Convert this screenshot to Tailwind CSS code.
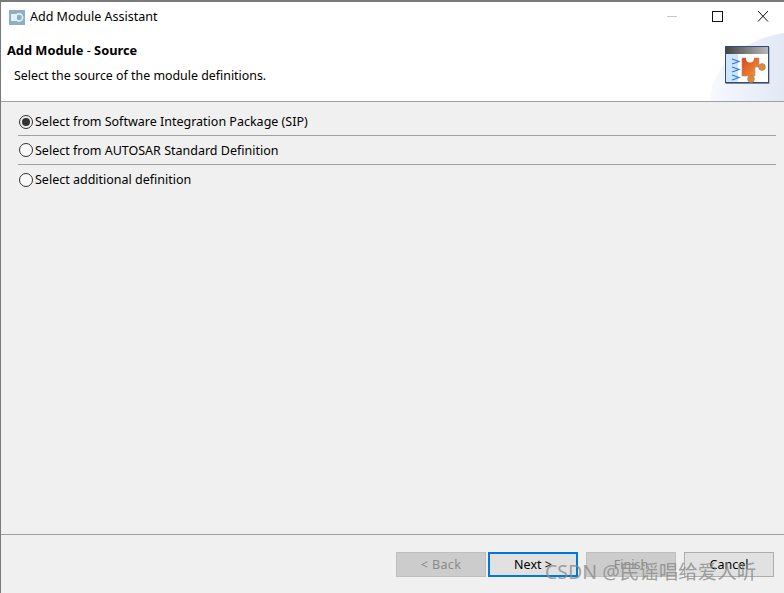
<!doctype html>
<html><head><meta charset="utf-8"><script src="https://cdn.jsdelivr.net/npm/@tailwindcss/browser@4"></script></head>
<body class="m-0">
<div class="relative w-[784px] h-[593px] overflow-hidden bg-[#f0f0f0] flex flex-col border-t-2 border-l border-[#7a7a7a] font-['Noto_Sans',sans-serif] text-[12.5px] text-black">
  <div class="bg-white h-[99px] relative shrink-0 overflow-hidden">
    <div class="absolute left-[709px] top-[30px] w-[90px] h-[70px] rounded-tl-[100%] bg-gradient-to-r from-[#f7f9fd] to-[#dde5f3]"></div>
    <div class="relative flex items-center h-[30px] pl-[8px] pt-[1px]">
      <svg width="16" height="15" viewBox="0 0 16 15" class="shrink-0"><rect width="16" height="15" fill="#8db1c4"/><rect x="2" y="4" width="6" height="7" fill="#e8eef2"/><circle cx="10" cy="7.500" r="3.600" fill="none" stroke="#e8eef2" stroke-width="1.600"/></svg>
      <span class="ml-[5px]">Add Module Assistant</span>
      <div class="ml-auto flex items-center">
        <svg width="46" height="29" viewBox="0 0 46 29"><path d="M21 13.500h10" stroke="#c8c8c8"/></svg>
        <svg width="46" height="29" viewBox="0 0 46 29"><rect x="20.500" y="8.500" width="10" height="10" fill="none" stroke="#111"/></svg>
        <svg width="46" height="29" viewBox="0 0 46 29"><path d="M20 8l10 10.500M30 8l-10 10.500" stroke="#111"/></svg>
      </div>
    </div>
    <div class="relative pl-[6px] mt-[10px] font-bold text-[12.800px] leading-[17px]">Add Module <span class="font-normal">-</span> Source</div>
    <div class="relative pl-[13px] mt-[8px] leading-[17px] text-[12.400px]">Select the source of the module definitions.</div>
    <svg class="absolute left-[723px] top-[42px]" width="46" height="40" viewBox="0 0 46 40">
      <defs><linearGradient id="h" x1="0" x2="1" y1="0" y2="0"><stop offset="0" stop-color="#444"/><stop offset="1" stop-color="#b8b8b8"/></linearGradient><linearGradient id="o" x1="0" x2="1" y1="0" y2="1"><stop offset="0" stop-color="#d9441c"/><stop offset="1" stop-color="#f59a38"/></linearGradient></defs>
      <rect x="1.500" y="3" width="44" height="37" fill="#8a8a8a"/>
      <rect x="1.500" y="2.500" width="43" height="36" fill="#fff" stroke="#2f4a80"/>
      <rect x="2" y="3" width="42" height="7" fill="url(#h)"/>
      <rect x="2" y="10" width="12" height="28" fill="#cfe5fb"/>
      <path d="M8 16l7 2.500l-7 2.500M8 24l7 2.500l-7 2.500M8 32l7 2.500l-7 2.500" fill="none" stroke="#2478d8" stroke-width="1.100" transform="translate(0 -1)"/>
      <path d="M18 14h17v9h-4v9h-13z" fill="url(#o)" stroke="#999" stroke-width=".6"/>
      <circle cx="26" cy="14.500" r="4" fill="#fff"/>
      <circle cx="38" cy="23" r="3.400" fill="#e8852f" stroke="#8a8a8a" stroke-width=".6"/>
      <circle cx="27" cy="35" r="3.400" fill="#e8852f" stroke="#8a8a8a" stroke-width=".6"/>
    </svg>
  </div>
  <div class="h-px bg-[#a0a0a0] shrink-0"></div>
  <div class="h-[432px] shrink-0 px-[17px] pt-[6px]">
    <label class="flex items-center h-[28px] gap-[2px] border-b border-[#a0a0a0] w-[758px]">
      <span class="w-[14px] h-[14px] rounded-full border border-[#333] flex items-center justify-center ml-px"><span class="w-[8px] h-[8px] rounded-full bg-[#333]"></span></span>
      <span class="pt-[2px]">Select from Software Integration Package (SIP)</span>
    </label>
    <label class="flex items-center h-[29px] gap-[2px] border-b border-[#a0a0a0] w-[758px]">
      <span class="w-[14px] h-[14px] rounded-full border border-[#333] bg-white/60 ml-px"></span>
      <span class="pt-[2px]">Select from AUTOSAR Standard Definition</span>
    </label>
    <label class="flex items-center h-[29px] gap-[2px] w-[758px]">
      <span class="w-[14px] h-[14px] rounded-full border border-[#333] bg-white/60 ml-px"></span>
      <span class="pt-[2px]">Select additional definition</span>
    </label>
  </div>
  <div class="h-px bg-[#a0a0a0] shrink-0"></div>
  <div class="flex pl-[395px] pt-[17px]">
    <button class="w-[90px] h-[25px] pt-[1px] bg-[#cccccc] border border-[#bfbfbf] text-[#8a8a8a] tracking-[0.4px]">&lt; Back</button>
    <button class="ml-[2px] w-[90px] h-[25px] pt-[1px] bg-[#e1e1e1] border-2 border-[#0078d7]">Next &gt;</button>
    <button class="ml-[8px] w-[90px] h-[25px] pt-[1px] bg-[#cccccc] border border-[#bfbfbf] text-[#8a8a8a]">Finish</button>
    <button class="ml-[8px] w-[90px] h-[25px] pt-[1px] bg-[#e1e1e1] border border-[#adadad]">Cancel</button>
  </div>
  <div class="absolute left-[544px] top-[558px] text-[19.500px] leading-[24px] whitespace-nowrap text-[#8a8a8a]/80 font-['Noto_Sans','Noto_Sans_CJK_SC',sans-serif]">CSDN @民谣唱给爱人听</div>
</div>
</body></html>
